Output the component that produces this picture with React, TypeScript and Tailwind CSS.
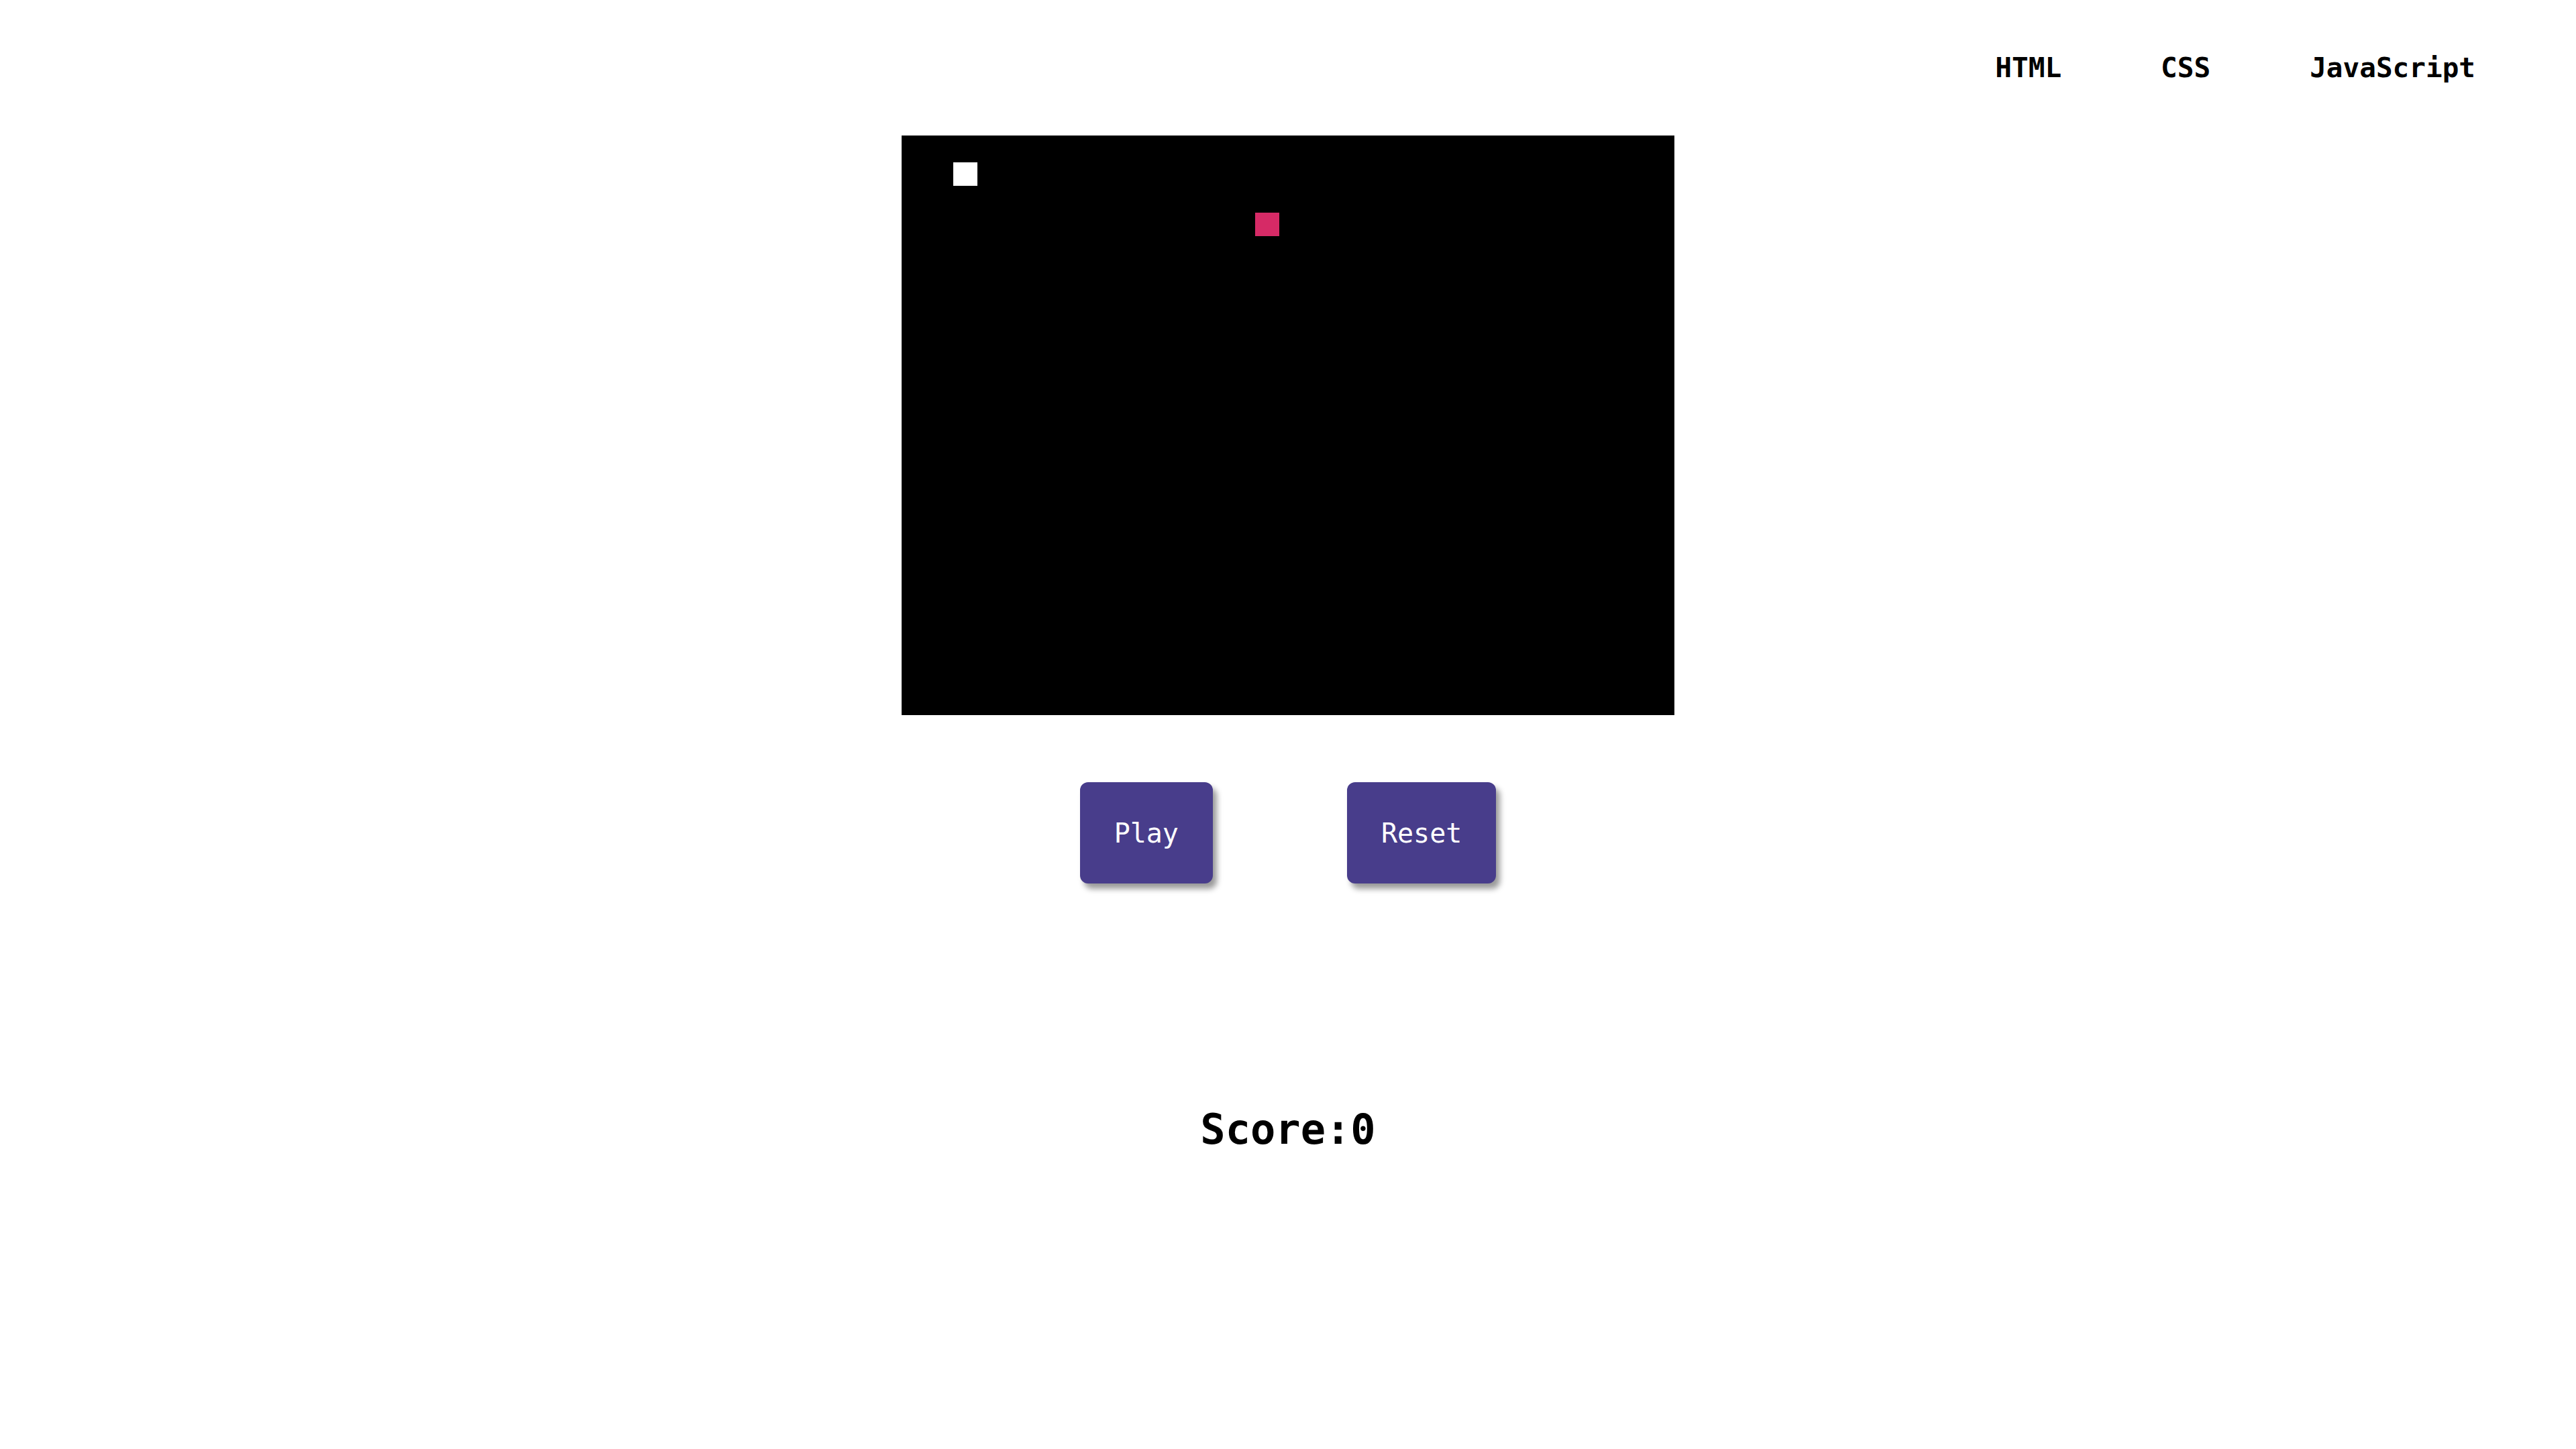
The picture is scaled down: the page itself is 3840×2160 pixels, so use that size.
import React from "react";

export default function App() {
  return (
    <div className="min-h-screen w-full bg-white font-['DejaVu_Sans_Mono',monospace] text-black">
      <nav className="flex justify-end gap-[148px] pr-[150px] pt-[81px] text-[41px] leading-[41px] font-bold">
        <span>HTML</span>
        <span>CSS</span>
        <span>JavaScript</span>
      </nav>

      <div className="mt-[80px] flex justify-center">
        <div className="relative h-[864px] w-[1152px] bg-black">
          <div className="absolute left-[77px] top-[40px] h-[35px] w-[36px] bg-white" />
          <div className="absolute left-[527px] top-[115px] h-[35px] w-[36px] bg-[#d62a66]" />
        </div>
      </div>

      <div className="mt-[100px] flex justify-center gap-[200px]">
        <button className="flex h-[151px] items-center justify-center rounded-[12px] bg-[#483d8b] px-[51px] text-[40px] leading-[40px] text-white shadow-[6px_8px_8px_rgba(0,0,0,0.4)]">
          Play
        </button>
        <button className="flex h-[151px] items-center justify-center rounded-[12px] bg-[#483d8b] px-[51px] text-[40px] leading-[40px] text-white shadow-[6px_8px_8px_rgba(0,0,0,0.4)]">
          Reset
        </button>
      </div>

      <div className="mt-[336px] text-center text-[62px] leading-[62px] font-bold">
        Score:0
      </div>
    </div>
  );
}
